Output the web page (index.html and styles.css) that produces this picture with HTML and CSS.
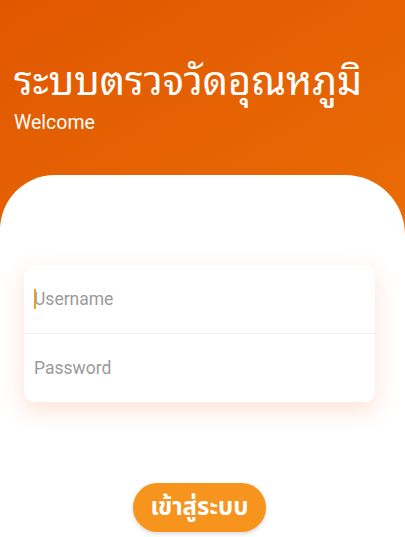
FILE: index.html
```html
<!DOCTYPE html>
<html lang="th">
<head>
<meta charset="utf-8">
<link rel="stylesheet" href="styles.css">
</head>
<body>
<div class="screen">
  <header class="hero">
    <h1 class="title">ระบบตรวจวัดอุณหภูมิ</h1>
    <p class="subtitle">Welcome</p>
  </header>
  <main class="panel">
    <form class="card">
      <div class="field"><span class="caret"></span><span class="ph">Username</span></div>
      <div class="field"><span class="ph">Password</span></div>
    </form>
    <div class="actions">
      <button class="btn" type="button">เข้าสู่ระบบ</button>
    </div>
  </main>
</div>
</body>
</html>
```
FILE: styles.css
```css
* { box-sizing: border-box; }
html, body { margin: 0; padding: 0; }
body {
  width: 405px;
  height: 537px;
  overflow: hidden;
  font-family: Roboto, "Noto Sans Thai", "Noto Sans", sans-serif;
  background: #fff;
}
.screen {
  height: 537px;
  display: flex;
  flex-direction: column;
  background: linear-gradient(150deg, #e15700 0%, #e96a05 55%, #f3870f 100%);
}
.hero {
  height: 175px;
  flex: none;
  padding: 53px 0 0 14px;
  color: #fff;
}
.title {
  margin: 0;
  font-family: "Noto Sans Thai Looped", "Noto Serif Thai", "Noto Sans Thai", sans-serif;
  font-weight: 400;
  font-size: 39.6px;
  line-height: 50px;
  letter-spacing: 0;
}
.subtitle {
  margin: 8px 0 0 0;
  font-size: 19.5px;
  line-height: 24px;
}
.panel {
  flex: 1;
  background: #fff;
  border-radius: 55px 60px 0 0;
  padding: 90px 30px 0 24px;
  display: flex;
  flex-direction: column;
}
.card {
  margin: 0;
  background: #fff;
  border-radius: 10px;
  height: 137px;
  box-shadow: 0 8px 22px rgba(240, 120, 70, 0.22);
  display: flex;
  flex-direction: column;
}
.field {
  flex: 1;
  display: flex;
  align-items: center;
  padding-left: 10px;
  position: relative;
}
.field + .field { border-top: 1px solid #efefef; }
.ph {
  font-size: 17.5px;
  color: #9a9a9a;
}
.caret {
  position: absolute;
  left: 10px;
  top: 24px;
  width: 2px;
  height: 20px;
  background: #e6a12a;
}
.actions {
  display: flex;
  justify-content: center;
  padding-top: 81px;
  padding-left: 0;
}
.btn {
  width: 133px;
  height: 49px;
  padding: 0;
  border: none;
  border-radius: 25px;
  background: #f7941d;
  color: #fff;
  font-family: "Noto Sans Thai", Roboto, sans-serif;
  font-weight: 700;
  font-size: 24px;
  box-shadow: 0 2px 4px rgba(0,0,0,0.15);
}
```
